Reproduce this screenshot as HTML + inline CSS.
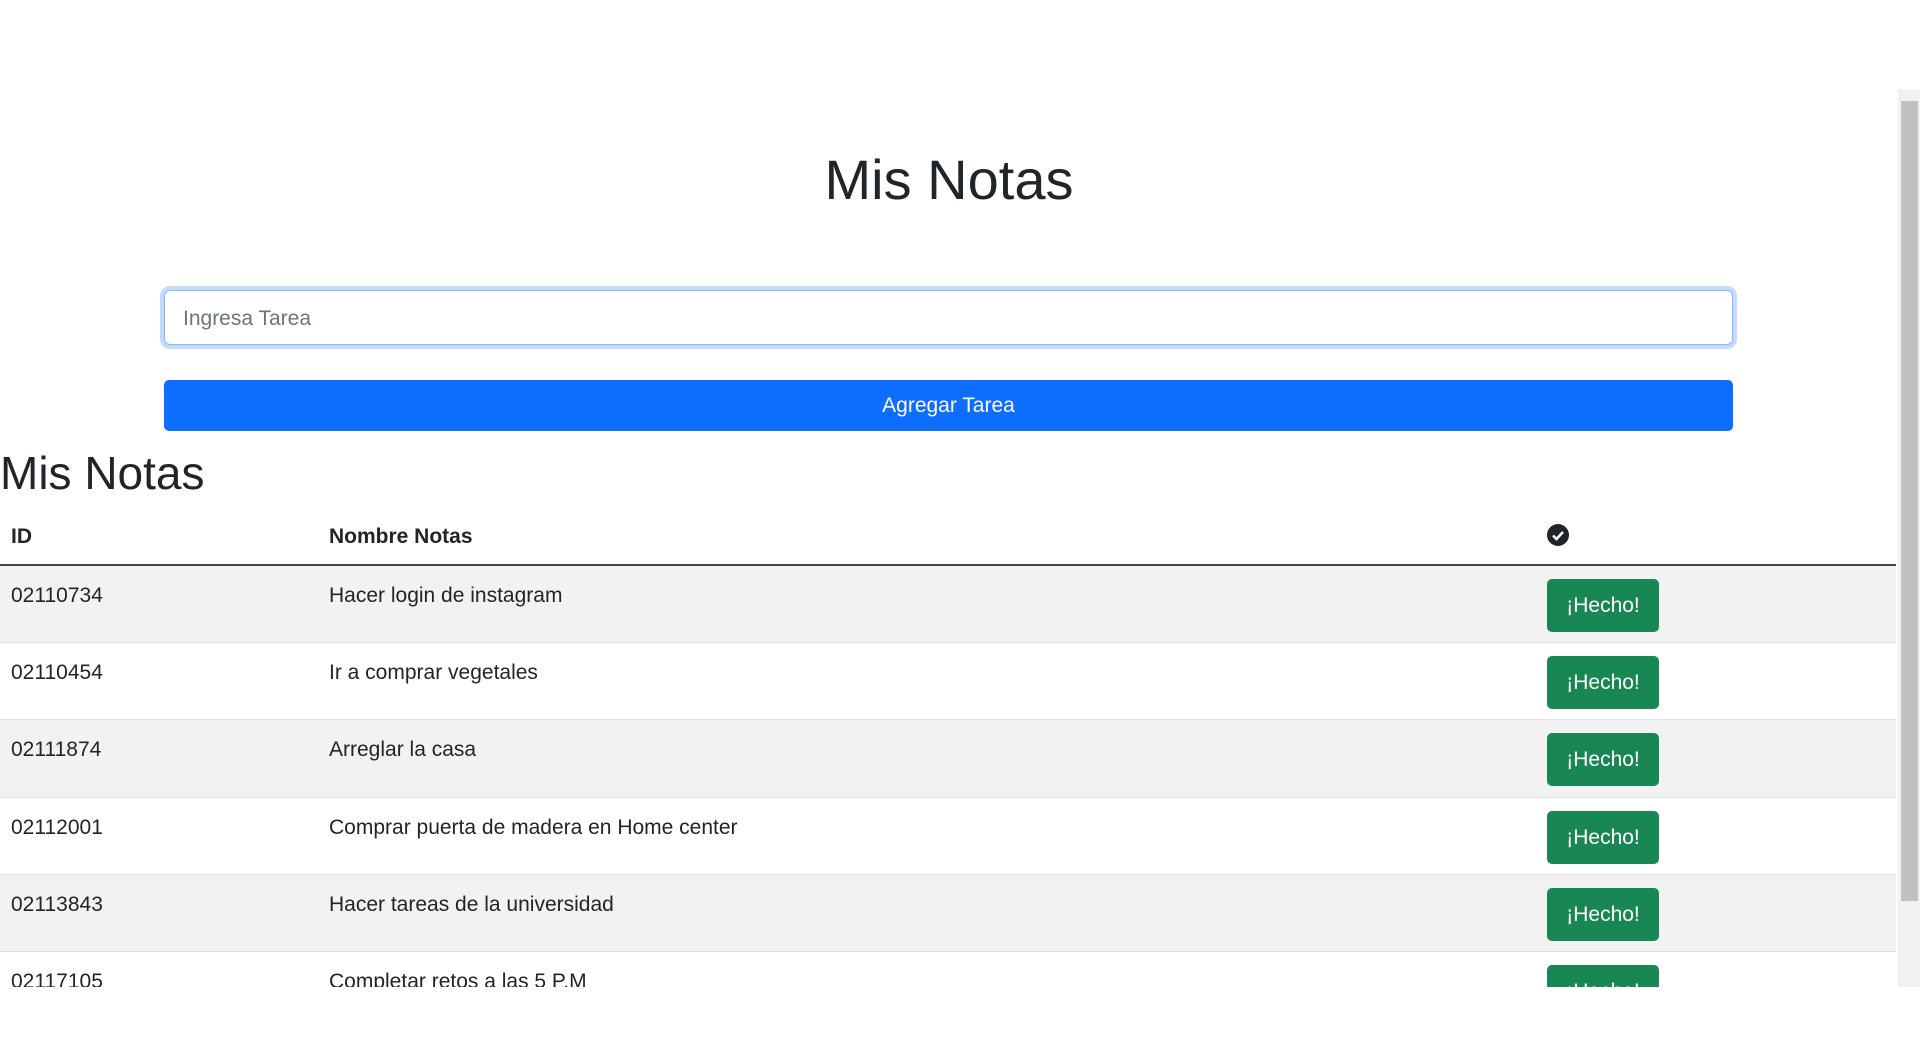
<!DOCTYPE html>
<html><head><meta charset="utf-8"><style>
*{box-sizing:border-box;margin:0;padding:0}
body{width:1920px;height:1055px;background:#fff;font-family:"Liberation Sans",sans-serif;color:#212529;position:relative;overflow:hidden}
#vp{position:absolute;left:0;top:0;width:1898px;height:987px;overflow:hidden}
h1{position:absolute;left:0;width:1898px;top:146px;text-align:center;font-size:56px;font-weight:500;line-height:1.2}
.inp{position:absolute;left:164px;top:290px;width:1569px;height:55px;border:1px solid #86b7fe;border-radius:6px;box-shadow:0 0 0 4px rgba(13,110,253,.25);font-size:21px;color:#6c757d;padding:14px 18px;line-height:28px}
.btn{position:absolute;left:164px;top:380px;width:1569px;height:51px;background:#0d6efd;color:#fff;border-radius:5px;text-align:center;font-size:21px;line-height:51px}
h2{position:absolute;left:0;top:444px;font-size:46px;font-weight:500;line-height:58px}
table{position:absolute;left:0;top:510px;width:1896px;border-collapse:collapse;font-size:21px}
th{text-align:left;font-weight:700;height:55px;padding:0 11px;border-bottom:2px solid #444;vertical-align:middle}
td{height:77.4px;padding:18px 11px 0;vertical-align:top;border-bottom:1px solid #dee2e6}
tr.s td{background:#f2f2f2}
.g{display:inline-block;width:112px;height:53px;background:#198754;color:#fff;border-radius:5px;text-align:center;line-height:53px;font-size:21px;margin-top:-5px}
.sb{position:absolute;left:1898px;top:89px;width:22px;height:898px;background:#f1f1f1}
.sb div{position:absolute;left:3px;top:12px;width:17px;height:800px;background:#c1c1c1}
</style></head><body>
<div id="vp">
<h1>Mis Notas</h1>
<div class="inp">Ingresa Tarea</div>
<div class="btn">Agregar Tarea</div>
<h2>Mis Notas</h2>
<table>
<tr><th style="width:318px">ID</th><th style="width:1218px">Nombre Notas</th><th><svg width="22" height="22" viewBox="0 0 22 22" style="vertical-align:middle;margin-top:-4px"><circle cx="11" cy="11" r="11" fill="#212529"/><path d="M6 11.5l3.5 3.5 6.5-7" stroke="#fff" stroke-width="2.6" fill="none"/></svg></th></tr>
<tr class="s"><td>02110734</td><td>Hacer login de instagram</td><td><span class="g">¡Hecho!</span></td></tr>
<tr><td>02110454</td><td>Ir a comprar vegetales</td><td><span class="g">¡Hecho!</span></td></tr>
<tr class="s"><td>02111874</td><td>Arreglar la casa</td><td><span class="g">¡Hecho!</span></td></tr>
<tr><td>02112001</td><td>Comprar puerta de madera en Home center</td><td><span class="g">¡Hecho!</span></td></tr>
<tr class="s"><td>02113843</td><td>Hacer tareas de la universidad</td><td><span class="g">¡Hecho!</span></td></tr>
<tr><td>02117105</td><td>Completar retos a las 5 P.M</td><td><span class="g">¡Hecho!</span></td></tr>
</table>
</div>
<div class="sb"><div></div></div>
</body></html>
